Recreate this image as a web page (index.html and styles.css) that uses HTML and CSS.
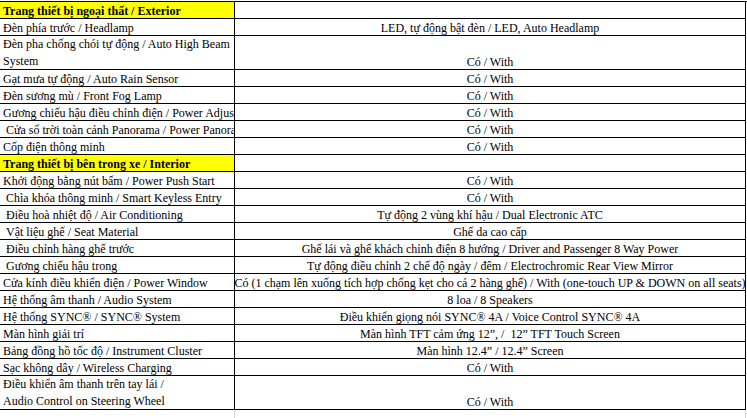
FILE: index.html
```html
<!DOCTYPE html>
<html lang="vi">
<head>
<meta charset="utf-8">
<title>Trang thiết bị</title>
<link rel="stylesheet" href="styles.css">
</head>
<body>
<div class="sheet">
  <div class="c l head">Trang thiết bị ngoại thất / Exterior</div><div class="c r"></div>
  <div class="c l">Đèn phía trước / Headlamp</div><div class="c r">LED, tự động bật đèn / LED, Auto Headlamp</div>
  <div class="c l tall">Đèn pha chống chói tự động / Auto High Beam<br>System</div><div class="c r tall">Có / With</div>
  <div class="c l">Gạt mưa tự động / Auto Rain Sensor</div><div class="c r">Có / With</div>
  <div class="c l">Đèn sương mù / Front Fog Lamp</div><div class="c r">Có / With</div>
  <div class="c l">Gương chiếu hậu điều chỉnh điện / Power Adjust</div><div class="c r">Có / With</div>
  <div class="c l ind">Cửa sổ trời toàn cảnh Panorama / Power Panorama</div><div class="c r">Có / With</div>
  <div class="c l">Cốp điện thông minh</div><div class="c r">Có / With</div>
  <div class="c l head">Trang thiết bị bên trong xe / Interior</div><div class="c r"></div>
  <div class="c l">Khởi động bằng nút bấm / Power Push Start</div><div class="c r">Có / With</div>
  <div class="c l ind">Chìa khóa thông minh / Smart Keyless Entry</div><div class="c r">Có / With</div>
  <div class="c l ind">Điều hoà nhiệt độ / Air Conditioning</div><div class="c r">Tự động 2 vùng khí hậu / Dual Electronic ATC</div>
  <div class="c l ind">Vật liệu ghế / Seat Material</div><div class="c r">Ghế da cao cấp</div>
  <div class="c l ind">Điều chỉnh hàng ghế trước</div><div class="c r">Ghế lái và ghế khách chỉnh điện 8 hướng / Driver and Passenger 8 Way Power</div>
  <div class="c l ind">Gương chiếu hậu trong</div><div class="c r">Tự động điều chỉnh 2 chế độ ngày / đêm / Electrochromic Rear View Mirror</div>
  <div class="c l">Cửa kính điều khiển điện / Power Window</div><div class="c r">Có (1 chạm lên xuống tích hợp chống kẹt cho cả 2 hàng ghế) / With (one-touch UP &amp; DOWN on all seats)</div>
  <div class="c l">Hệ thống âm thanh / Audio System</div><div class="c r">8 loa / 8 Speakers</div>
  <div class="c l">Hệ thống SYNC® / SYNC® System</div><div class="c r">Điều khiển giọng nói SYNC® 4A / Voice Control SYNC® 4A</div>
  <div class="c l">Màn hình giải trí</div><div class="c r">Màn hình TFT cảm ứng 12”, /&nbsp; 12” TFT Touch Screen</div>
  <div class="c l">Bảng đồng hồ tốc độ / Instrument Cluster</div><div class="c r">Màn hình 12.4” / 12.4” Screen</div>
  <div class="c l">Sạc không dây / Wireless Charging</div><div class="c r">Có / With</div>
  <div class="c l tall">Điều khiển âm thanh trên tay lái /<br>Audio Control on Steering Wheel</div><div class="c r tall">Có / With</div>
  <div class="g"></div><div class="g"></div>
</div>
</body>
</html>
```

FILE: styles.css
```css
html, body {
  margin: 0;
  padding: 0;
  background: #ffffff;
}

body {
  padding-top: 1px;
  font-family: "Liberation Serif", "Times New Roman", serif;
  font-size: 12px;
  color: #000000;
}

.sheet {
  display: grid;
  grid-template-columns: 235px 511px;
  border-top: 1px solid #000000;
}

.c {
  height: 16px;
  border-right: 1px solid #000000;
  border-bottom: 1px solid #000000;
  overflow: hidden;
  white-space: nowrap;
  display: flex;
  align-items: flex-end;
  line-height: 14px;
  box-sizing: content-box;
}

.l {
  padding-left: 3px;
  width: 231px;
}

.l.ind {
  padding-left: 6px;
  width: 228px;
}

.r {
  justify-content: center;
  text-align: center;
}

.tall {
  height: 33px;
}

.l.tall {
  display: block;
  line-height: 17px;
}

.head {
  background: #ffff00;
  font-weight: bold;
}

.g {
  height: 8px;
  border-right: 1px solid #d4d4d4;
}
```
